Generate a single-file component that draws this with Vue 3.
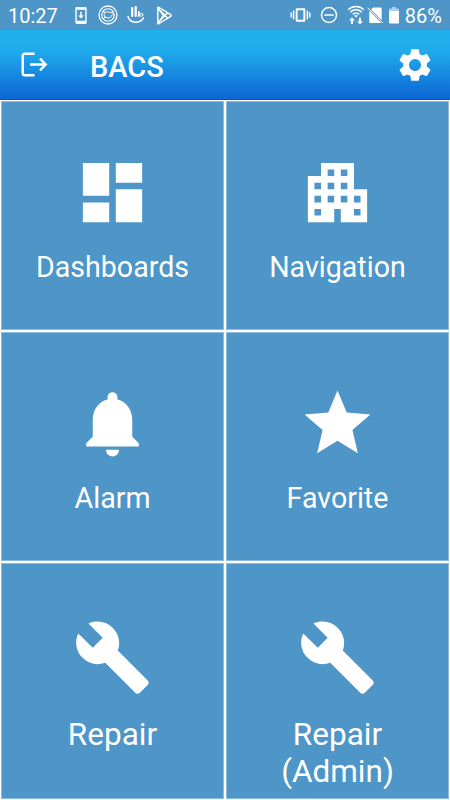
<template>
  <div class="screen">
    <!-- STATUS BAR -->
    <div class="status-bar">
      <span class="clock">10:27</span>
      <svg class="s-download" viewBox="0 0 12 18">
        <path fill-rule="evenodd" d="M1.500 0h9A1.500 1.500 0 0 1 12 1.500v15a1.500 1.500 0 0 1-1.500 1.500h-9A1.500 1.500 0 0 1 0 16.500v-15A1.500 1.500 0 0 1 1.500 0zM1.500 3v11.500h9V3z" />
        <path d="M5.200 5h1.600v4H9l-3 3.300L3 9h2.200z" />
      </svg>
      <svg class="s-ring line" viewBox="0 0 20 20">
        <circle cx="10" cy="10" r="9" stroke-width="1.300" />
        <circle cx="10" cy="10" r="6.300" stroke-width="1.100" />
        <path stroke-width="1" d="M5 6.500c1.500 1.500 3 .5 4.500.3s2.500 1.700 5.500.7M5.500 14c.5-2 2-2.500 3.500-1.500s3.500.5 4-1 1-2 2.500-2M6.800 7.500c-1 1.500-1 3 .2 4.800" />
      </svg>
      <svg class="s-hand line" viewBox="0 0 18 18">
        <path stroke-width="2.200" d="M5.200 2v8M8.700 1v9" />
        <path stroke-width="1.800" d="M11.800 6v4" />
        <circle cx="14.300" cy="8.800" r="1.500" stroke-width="1" />
        <path stroke-width="1.500" d="M1 10.500c1 3.700 4 5.700 7.500 5.700s6.500-1.500 8-4.300" />
      </svg>
      <svg class="s-play line" viewBox="0 0 18 20">
        <path stroke-width="1.500" d="M2.500 1.500v17q.3.500 1 .2L16 11q1.200-1 0-2L3.500 1.300q-.7-.3-1 .2zM2.500 2l10.300 11M2.500 18L12.800 7M2.500 2l6 8-6 8" />
      </svg>

      <div class="status-right">
        <svg class="s-vibrate" viewBox="0 0 22 16">
          <path fill-rule="evenodd" d="M7 1h8a1 1 0 0 1 1 1v12a1 1 0 0 1-1 1H7a1 1 0 0 1-1-1V2a1 1 0 0 1 1-1zm1 2v10h6V3z" />
          <path d="M3 3.500h1.600v9H3zM.5 5.500H2v5H.5zM17.400 3.500H19v9h-1.600zM20 5.500h1.500v5H20z" />
        </svg>
        <svg class="s-dnd line" viewBox="0 0 18 18">
          <circle cx="9" cy="9" r="7.500" stroke-width="1.500" />
          <path stroke-width="1.700" d="M5 9h8" />
        </svg>
        <svg class="s-wifi" viewBox="0 0 18 20">
          <path class="arc" d="M1.200 4.600c4.600-4.200 11-4.200 15.600 0M3.400 7.100c3.200-3 8-3 11.200 0M5.800 9.400c1.800-1.700 4.600-1.700 6.400 0" />
          <path d="M7.200 10.700q1.800-1.200 3.600 0L9 12.600zM5 12.200l2.900 3.300H6V19H4v-3.500H2.100zM13 19.500l-2.900-3.300H12v-3.500h2v3.500h1.900z" />
        </svg>
        <svg class="s-sim" viewBox="0 0 17 17">
          <path d="M6 .5h7.500q1.200 0 1.200 1.200v11.600L4 2.500zM2.300 3.800L14 15.700q-.3.300-.8.300H3.500q-1.200 0-1.200-1.200z" />
          <path class="slash" d="M.7.800l15 15.200" />
        </svg>
        <svg class="s-battery" viewBox="0 0 10 17">
          <path opacity=".55" d="M3 0h4v1.600h2q1 0 1 1V4H0V2.600q0-1 1-1h2z" />
          <path d="M0 4h10v11.500q0 1-1 1H1q-1 0-1-1z" />
        </svg>
        <span class="percent">86%</span>
      </div>
    </div>

    <!-- HEADER -->
    <header class="header">
      <button class="icon-btn logout" aria-label="Logout">
        <svg viewBox="0 0 27 25">
          <path d="M13.500 1.700H4Q1.700 1.700 1.700 4v17Q1.700 23.300 4 23.300h9.500M9 12.500h15.500M19 6.700l5.700 5.800-5.700 5.800" />
        </svg>
      </button>
      <h1>BACS</h1>
      <button class="icon-btn settings" aria-label="Settings">
        <svg viewBox="0 0 24 24">
          <path :d="gearPath" />
        </svg>
      </button>
    </header>

    <!-- MENU -->
    <main class="menu">
      <button v-for="item in menuItems" :key="item.label" class="tile" :class="{ large: item.large }">
        <svg class="tile-icon" viewBox="0 0 24 24">
          <path :d="item.icon" />
        </svg>
        <span class="tile-label">{{ item.label }}</span>
      </button>
    </main>
  </div>
</template>

<script setup>
const gearPath = 'M12 15.800A3.800 3.800 0 0 1 8.200 12 3.800 3.800 0 0 1 12 8.200a3.800 3.800 0 0 1 3.800 3.800 3.800 3.800 0 0 1-3.800 3.800m7.430-2.830c.04-.32.07-.64.07-.97s-.03-.66-.07-1l2.110-1.630c.19-.15.24-.42.12-.64l-2-3.460c-.12-.22-.39-.31-.61-.22l-2.490 1c-.52-.39-1.060-.73-1.690-.98l-.37-2.650A.506.506 0 0 0 14 2h-4c-.25 0-.46.18-.5.42l-.37 2.650c-.63.25-1.170.59-1.690.98l-2.490-1c-.22-.09-.49 0-.61.22l-2 3.460c-.13.22-.07.49.12.64L4.570 11c-.04.34-.07.67-.07 1s.03.65.07.97l-2.110 1.660c-.19.15-.25.42-.12.64l2 3.460c.12.22.39.3.61.22l2.490-1.010c.52.4 1.060.74 1.690.99l.37 2.650c.04.24.25.42.5.42h4c.25 0 .46-.18.5-.42l.37-2.650c.63-.26 1.170-.59 1.690-.99l2.490 1.010c.22.08.49 0 .61-.22l2-3.460c.12-.22.07-.49-.12-.64z'

const wrenchPath = 'M22.700 19l-9.100-9.100c.9-2.300.4-5-1.500-6.900-2-2-5-2.400-7.400-1.300L9 6 6 9 1.600 4.700C.4 7.100.9 10.100 2.900 12.100c1.900 1.900 4.600 2.400 6.900 1.500l9.100 9.100c.4.4 1 .4 1.400 0l2.300-2.300c.5-.4.5-1.100.1-1.400z'

const menuItems = [
  {
    label: 'Dashboards',
    icon: 'M3 13h8V3H3v10zm0 8h8v-6H3v6zm10 0h8V11h-8v10zm0-18v6h8V3h-8z'
  },
  {
    label: 'Navigation',
    icon: 'M17 11V3H7v4H3v14h8v-4h2v4h8V11h-4zM7 19H5v-2h2v2zm0-4H5v-2h2v2zm0-4H5V9h2v2zm4 4H9v-2h2v2zm0-4H9V9h2v2zm0-4H9V5h2v2zm4 8h-2v-2h2v2zm0-4h-2V9h2v2zm0-4h-2V5h2v2zm4 12h-2v-2h2v2zm0-4h-2v-2h2v2z'
  },
  {
    label: 'Alarm',
    icon: 'M12 22c1.100 0 2-.9 2-2h-4c0 1.100.89 2 2 2zm6-6v-5c0-3.070-1.640-5.640-4.500-6.320V4c0-.83-.67-1.500-1.500-1.500s-1.500.67-1.500 1.500v.68C7.630 5.360 6 7.920 6 11v5l-2 2v1h16v-1l-2-2z'
  },
  {
    label: 'Favorite',
    icon: 'M12 17.270L18.180 21l-1.640-7.030L22 9.240l-7.190-.61L12 2 9.190 8.630 2 9.240l5.460 4.730L5.820 21z'
  },
  { label: 'Repair', icon: wrenchPath, large: true },
  { label: 'Repair (Admin)', icon: wrenchPath, large: true }
]
</script>

<style>
body {
  margin: 0;
  background: #fff;
}
</style>

<style scoped>
.screen {
  width: 450px;
  height: 800px;
  display: flex;
  flex-direction: column;
  overflow: hidden;
  font-family: Roboto, "Liberation Sans", sans-serif;
  color: #fff;
}

svg {
  display: block;
  flex: none;
  fill: #fff;
}

button {
  border: none;
  padding: 0;
  font: inherit;
  color: inherit;
  cursor: pointer;
}

.line {
  fill: none;
  stroke: #fff;
  stroke-linecap: round;
  stroke-linejoin: round;
}

.status-bar {
  height: 30px;
  flex: none;
  display: flex;
  align-items: center;
  background: #4e95c8;
  padding: 0 8px;
  box-sizing: border-box;
}

.clock,
.percent {
  font-size: 20px;
  line-height: 30px;
  padding-top: 2px;
}

.clock {
  width: 67px;
}

.s-download {
  width: 12px;
  height: 17px;
}

.s-ring {
  width: 20px;
  height: 20px;
  margin-left: 11px;
}

.s-hand {
  width: 18px;
  height: 18px;
  margin-left: 9px;
}

.s-play {
  width: 18px;
  height: 19px;
  margin-left: 10px;
}

.status-right {
  margin-left: auto;
  display: flex;
  align-items: center;
}

.s-vibrate {
  width: 21px;
  height: 16px;
}

.s-dnd {
  width: 18px;
  height: 18px;
  margin-left: 9px;
}

.s-wifi {
  width: 18px;
  height: 20px;
  margin-left: 9px;
}

.arc {
  fill: none;
  stroke: #fff;
  stroke-width: 1.5;
}

.s-sim {
  width: 17px;
  height: 17px;
  margin-left: 2px;
}

.slash {
  stroke: #fff;
  stroke-width: 1;
}

.s-battery {
  width: 10px;
  height: 17px;
  margin: 0 6px 0 5px;
}

.header {
  height: 70px;
  flex: none;
  display: flex;
  align-items: center;
  box-sizing: border-box;
  padding: 0 16px 0 21px;
  border-bottom: 1px solid #0a55bd;
  background: linear-gradient(#20b0ee 0%, #20abec 30%, #0c66d4 100%);
}

.icon-btn {
  background: none;
}

.logout svg {
  width: 27px;
  height: 25px;
  fill: none;
  stroke: #fff;
  stroke-width: 2.4;
}

h1 {
  flex: 1;
  margin: 5px 0 0 42px;
  font-size: 29px;
  font-weight: 500;
}

.settings svg {
  width: 38px;
  height: 38px;
}

.menu {
  flex: 1;
  display: grid;
  grid-template-columns: 1fr 1fr;
  grid-template-rows: 229px 229px 1fr;
  gap: 2px;
  padding: 1px;
  background: #fff;
}

.tile {
  display: flex;
  flex-direction: column;
  align-items: center;
  box-sizing: border-box;
  padding-top: 51px;
  min-height: 0;
  background: #4e95c8;
  border: 1px solid #8fbde0;
}

.tile-icon {
  width: 79px;
  height: 79px;
}

.tile-label {
  margin-top: 18px;
  font-size: 28.6px;
  line-height: 34px;
}

.large {
  padding-top: 54px;
}

.large .tile-label {
  width: 130px;
  font-size: 31.5px;
  line-height: 37px;
  margin-top: 19px;
}
</style>
